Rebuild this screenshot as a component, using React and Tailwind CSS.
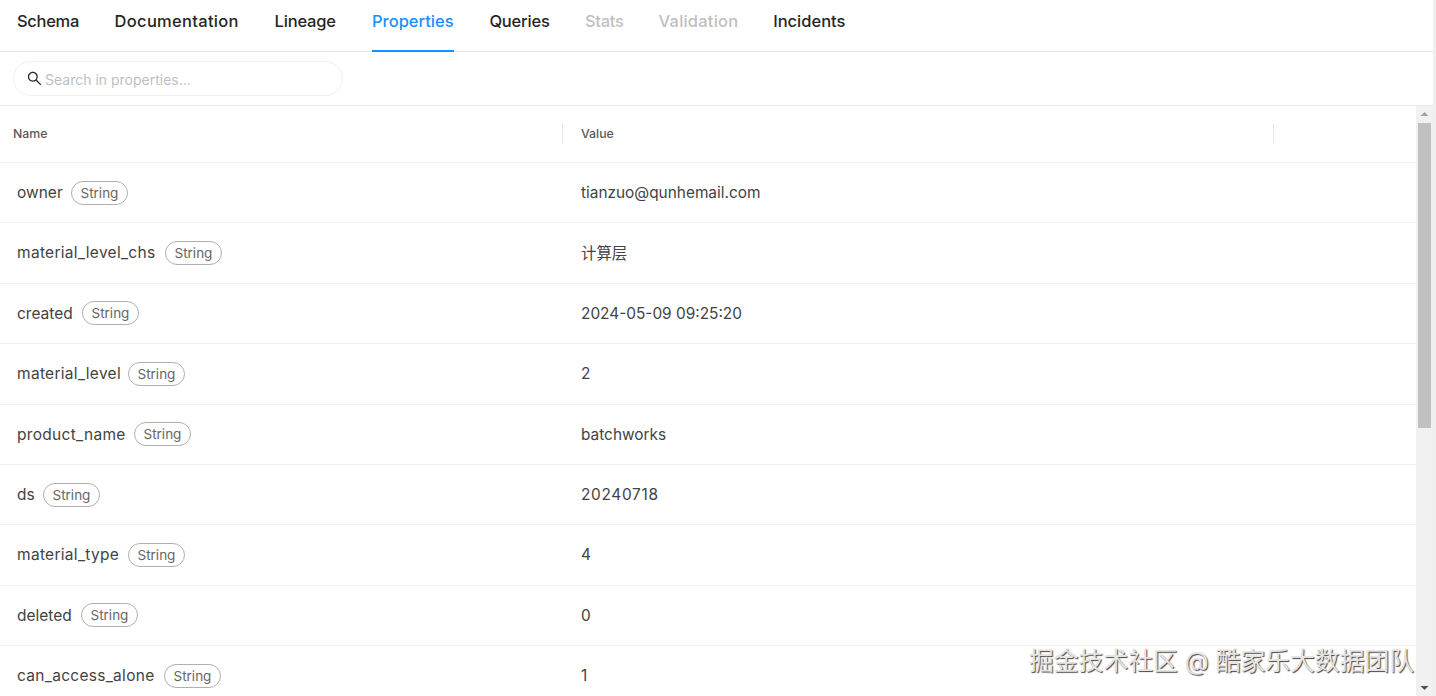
import { AiOutlineSearch } from 'react-icons/ai'

const tabs = [
  { label: 'Schema', width: 'w-[62px] tracking-[-0.3px]', color: 'text-[#262626] border-transparent' },
  { label: 'Documentation', width: 'w-[124px] tracking-[0.3px]', color: 'text-[#262626] border-transparent' },
  { label: 'Lineage', width: 'w-[62px] tracking-[-0.2px]', color: 'text-[#262626] border-transparent' },
  { label: 'Properties', width: 'w-[82px]', color: 'text-[#1890ff] border-[#1890ff]' },
  { label: 'Queries', width: 'w-[60px] tracking-[-0.2px]', color: 'text-[#262626] border-transparent' },
  { label: 'Stats', width: 'w-[38px] tracking-[-0.3px]', color: 'text-[#bfbfbf] border-transparent' },
  { label: 'Validation', width: 'w-[79px] tracking-[0.2px]', color: 'text-[#bfbfbf] border-transparent' },
  { label: 'Incidents', width: 'w-[72px]', color: 'text-[#262626] border-transparent' },
]

const properties = [
  { name: 'owner', nameWidth: 'w-[45px]', value: 'tianzuo@qunhemail.com' },
  { name: 'material_level_chs', nameWidth: 'w-[139px]', value: '计算层' },
  { name: 'created', nameWidth: 'w-[56px]', value: '2024-05-09 09:25:20' },
  { name: 'material_level', nameWidth: 'w-[102px]', value: '2' },
  { name: 'product_name', nameWidth: 'w-[108px]', value: 'batchworks' },
  { name: 'ds', nameWidth: 'w-[17px]', value: '20240718', valueClass: 'tracking-[0.7px]' },
  { name: 'material_type', nameWidth: 'w-[102px]', value: '4' },
  { name: 'deleted', nameWidth: 'w-[55px]', value: '0' },
  { name: 'can_access_alone', nameWidth: 'w-[138px]', value: '1' },
]

const App = () => {
  return (
    <div className="relative h-[696px] w-full overflow-hidden bg-white border-r-[3px] border-[#f0f0f0] font-['Inter','Noto_Sans_CJK_SC',sans-serif]">
      {/* Tabs */}
      <div className="flex h-[52px] gap-[35.6px] border-b border-[#e8e8e8] pl-[17px]">
        {tabs.map((tab) => (
          <div
            key={tab.label}
            className={`h-[52px] shrink-0 border-b-2 pt-[10px] text-center text-[16.5px] leading-[22px] font-medium whitespace-nowrap ${tab.width} ${tab.color}`}
          >
            {tab.label}
          </div>
        ))}
      </div>

      {/* Search */}
      <div className="flex h-[54px] items-center border-b border-[#e8e8e8] pl-[13px]">
        <div className="flex h-[35px] w-[330px] items-center gap-[2px] rounded-full border border-[#f0f0f0] pl-[12px]">
          <AiOutlineSearch size={17} className="text-[#262626]" />
          <span className="pt-[1px] text-[14px] text-[#bfbfbf]">Search in properties...</span>
        </div>
      </div>

      {/* Table */}
      <div className="flex h-[590px]">
        <div className="min-w-0 flex-1 overflow-hidden">
          <div className="flex h-[57px] items-center border-b border-[#f0f0f0] text-[12.3px] font-medium text-[#595959]">
            <div className="w-[562px] pl-[13px]">Name</div>
            <div className="h-[20px] w-px bg-[#e8e8e8]" />
            <div className="w-[710px] pl-[18px]">Value</div>
            <div className="h-[20px] w-px bg-[#e8e8e8]" />
          </div>
          {properties.map((row) => (
            <div key={row.name} className="flex h-[60.4px] shrink-0 items-center border-b border-[#f0f0f0] text-[#434343]">
              <div className="flex w-[581px] items-center gap-[9px] pl-[17px]">
                <span className={`text-[15.5px] whitespace-nowrap ${row.nameWidth} ${row.name.includes('_') ? 'tracking-[0.3px]' : 'tracking-normal'}`}>
                  {row.name}
                </span>
                <span className="flex h-[24px] items-center rounded-full border border-[#b0b0b0] px-[8.5px] text-[13.5px] text-[#666666]">
                  String
                </span>
              </div>
              <div className={`text-[15.4px] ${row.valueClass || ''}`}>{row.value}</div>
            </div>
          ))}
        </div>

        {/* Scrollbar */}
        <div className="flex w-[17px] flex-col items-center bg-[#f1f1f1]">
          <svg width="17" height="17" viewBox="0 0 17 17" className="shrink-0">
            <path d="M8.5 6 L12.5 10 H4.5 Z" fill="#a3a3a3" />
          </svg>
          <div className="h-[305px] w-[13px] bg-[#c1c1c1]" />
          <div className="flex-1" />
          <svg width="17" height="17" viewBox="0 0 17 17" className="shrink-0">
            <path d="M8.5 11 L12.5 7 H4.5 Z" fill="#505050" />
          </svg>
        </div>
      </div>

      {/* Watermark */}
      <div className="absolute top-[644px] left-[1029px] text-[24.8px] leading-[34px] whitespace-nowrap text-[#e4e4e4] [text-shadow:1px_1px_1px_#444]">
        掘金技术社区 @ 酷家乐大数据团队
      </div>
    </div>
  )
}

export default App
